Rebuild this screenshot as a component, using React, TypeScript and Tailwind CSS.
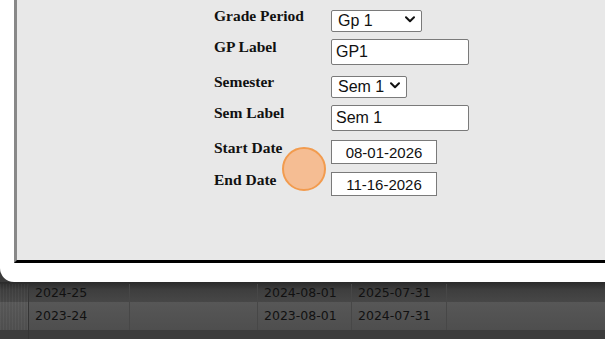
const labelCls =
  "w-[117px] shrink-0 -mt-[1px] font-['Liberation_Serif',serif] text-[15.5px] leading-[18px] font-bold text-[#111]";
const inputCls =
  "border border-[#7a7a7a] bg-white font-['Liberation_Sans',Arial,sans-serif] text-[#111] outline-none";

function Select({ value, width }: { value: string; width: string }) {
  return (
    <div className={`relative ${width} h-[22px]`}>
      <select
        defaultValue={value}
        className={`${inputCls} text-[16px] rounded-[2px] appearance-none w-full h-full pl-[6px] pr-[20px] leading-[20px]`}
      >
        <option>{value}</option>
      </select>
      <svg
        viewBox="0 0 10 7"
        className="pointer-events-none absolute right-[7px] top-[8px] h-[7px] w-[10px]"
      >
        <polyline points="1,1.2 5,5.2 9,1.2" fill="none" stroke="#111" strokeWidth="2" strokeLinecap="round" strokeLinejoin="round" />
      </svg>
    </div>
  );
}

function Row({ label, children, className = "" }: { label: string; children: React.ReactNode; className?: string }) {
  return (
    <div className={`flex items-start ${className}`}>
      <span className={labelCls}>{label}</span>
      {children}
    </div>
  );
}

const rows = [
  { name: "2024-25", start: "2024-08-01", end: "2025-07-31" },
  { name: "2023-24", start: "2023-08-01", end: "2024-07-31" },
];

export default function App() {
  return (
    <div className="relative w-[605px] h-[339px] overflow-hidden bg-[#3a3a3a] flex flex-col">
      {/* dialog */}
      <div className="h-[282px] shrink-0 bg-white rounded-bl-[14px] pl-[14px] pb-[19px] flex flex-col">
        <div className="flex-1 bg-[#e8e8e8] border-l-[3px] border-l-[#888] border-b-[3px] border-b-black pl-[197px] pt-[8px]">
          <div className="flex flex-col gap-[9px]">
            <Row label="Grade Period">
              <Select value="Gp 1" width="w-[91px]" />
            </Row>
            <Row label="GP Label">
              <input readOnly value="GP1" className={`${inputCls} text-[16px] rounded-[2px] w-[138px] h-[26px] px-[4px]`} />
            </Row>
            <Row label="Semester">
              <Select value="Sem 1" width="w-[76px]" />
            </Row>
            <Row label="Sem Label">
              <input readOnly value="Sem 1" className={`${inputCls} text-[16px] rounded-[2px] w-[138px] h-[26px] px-[4px]`} />
            </Row>
            <Row label="Start Date">
              <input readOnly value="08-01-2026" className={`${inputCls} text-[15px] w-[106px] h-[24px] text-center`} />
            </Row>
            <Row label="End Date" className="-mt-[1px]">
              <input readOnly value="11-16-2026" className={`${inputCls} text-[15px] w-[106px] h-[24px] text-center`} />
            </Row>
          </div>
        </div>
      </div>

      {/* table behind the dialog */}
      <div className="flex-1 flex flex-col font-['DejaVu_Sans',sans-serif] text-[12.5px] text-[#111]">
        {rows.map((r, i) => (
          <div
            key={r.name}
            className={`flex ${
              i === 0
                ? "h-[20px] pt-[2px] bg-gradient-to-b from-[#2a2a2a] via-[#3e3e3e] via-40% to-[#474747]"
                : "h-[28px] bg-gradient-to-b from-[#575757] to-[#4e4e4e]"
            }`}
          >
            <div className="w-[29px] shrink-0 border-r border-[#353535] bg-[repeating-linear-gradient(90deg,rgba(255,255,255,0.04)_0px,rgba(255,255,255,0.04)_1px,transparent_1px,transparent_3px)]" />
            <div className="w-[101px] shrink-0 flex items-center pl-[6px] border-r border-[#474747]">{r.name}</div>
            <div className="w-[128px] shrink-0 border-r border-[#474747]" />
            <div className="w-[94px] shrink-0 flex items-center pl-[6px] border-r border-[#474747]">{r.start}</div>
            <div className="w-[95px] shrink-0 flex items-center pl-[6px] border-r border-[#474747]">{r.end}</div>
            <div className="flex-1" />
          </div>
        ))}
        <div className="flex-1 flex bg-[#3c3c3c]">
          <div className="w-[29px] shrink-0 border-r border-[#353535]" />
        </div>
      </div>

      {/* click highlight */}
      <div className="absolute left-[282px] top-[147px] h-[44px] w-[44px] rounded-full bg-[#f5bd93] border-2 border-[#f29b4e]" />
    </div>
  );
}
